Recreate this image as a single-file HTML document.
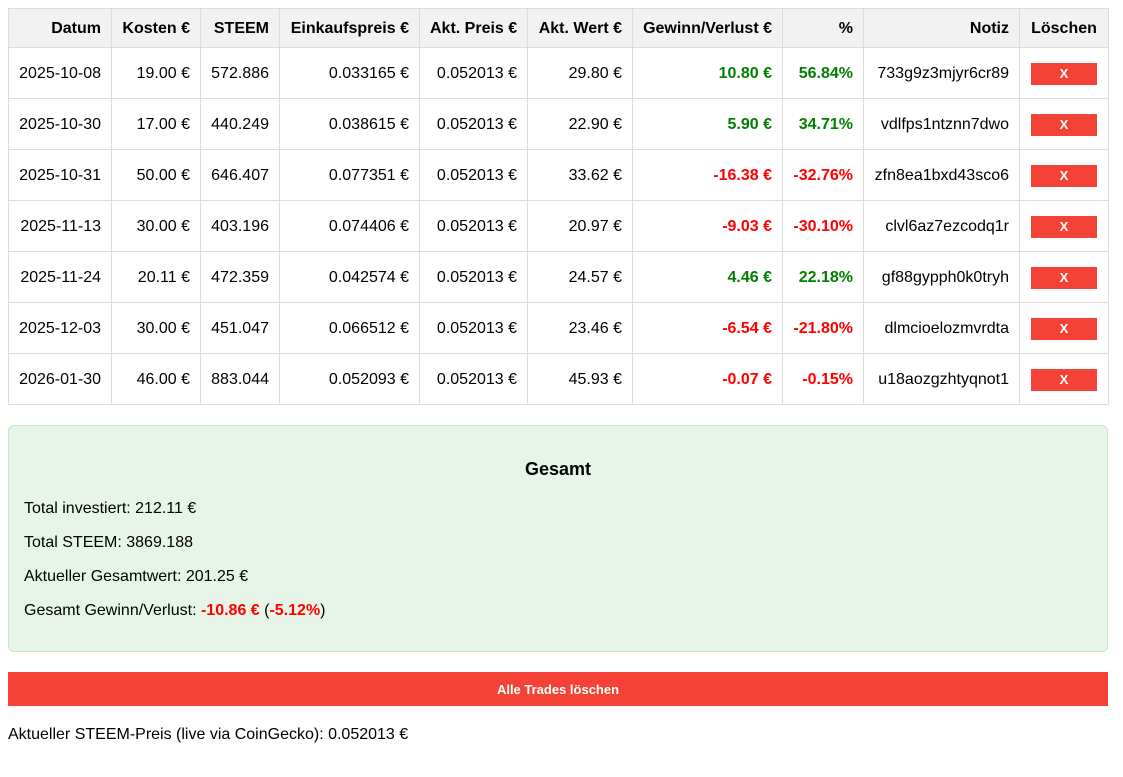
<!DOCTYPE html>
<html><head><meta charset="utf-8"><style>
body{margin:0;background:#fff;font-family:"Liberation Sans",Arial,sans-serif;font-size:16px;color:#000;}
table{position:absolute;left:8px;top:8px;border-collapse:collapse;table-layout:fixed;width:1100px;}
td,th{border:1px solid #ddd;text-align:right;padding:1px 10px 0 10px;height:49px;white-space:nowrap;}
th{background:#f2f2f2;height:37px;font-weight:bold;}
td.c,th.c{text-align:center;}
.g{color:#008000;font-weight:bold}.r{color:#f00;font-weight:bold}
.x{display:inline-block;width:66px;height:22px;line-height:22px;background:#f44336;color:#fff;font-weight:bold;font-size:13px;text-align:center;vertical-align:middle}
.box{position:absolute;left:8px;top:425px;width:1098px;height:225px;background:#e7f5e8;border:1px solid #c8e6c9;border-radius:6px;}
.box h3{margin:0;position:absolute;top:33px;width:100%;text-align:center;font-size:18px;}
.box p{position:absolute;left:15px;margin:0;}
.btn{position:absolute;left:8px;top:672px;width:1100px;height:34px;background:#f44336;color:#fff;font-weight:bold;font-size:13px;text-align:center;line-height:35px;}
.foot{position:absolute;left:8px;top:726px;}
</style></head><body>
<table>
<colgroup><col style="width:103px"><col style="width:89px"><col style="width:79px"><col style="width:140px"><col style="width:108px"><col style="width:105px"><col style="width:150px"><col style="width:81px"><col style="width:156px"><col style="width:89px"></colgroup>
<tr><th>Datum</th><th>Kosten €</th><th>STEEM</th><th>Einkaufspreis €</th><th>Akt. Preis €</th><th>Akt. Wert €</th><th>Gewinn/Verlust €</th><th>%</th><th>Notiz</th><th class="c">Löschen</th></tr>
<tr><td>2025-10-08</td><td>19.00 €</td><td>572.886</td><td>0.033165 €</td><td>0.052013 €</td><td>29.80 €</td><td class="g">10.80 €</td><td class="g">56.84%</td><td>733g9z3mjyr6cr89</td><td class="c"><span class="x">X</span></td></tr>
<tr><td>2025-10-30</td><td>17.00 €</td><td>440.249</td><td>0.038615 €</td><td>0.052013 €</td><td>22.90 €</td><td class="g">5.90 €</td><td class="g">34.71%</td><td>vdlfps1ntznn7dwo</td><td class="c"><span class="x">X</span></td></tr>
<tr><td>2025-10-31</td><td>50.00 €</td><td>646.407</td><td>0.077351 €</td><td>0.052013 €</td><td>33.62 €</td><td class="r">-16.38 €</td><td class="r">-32.76%</td><td>zfn8ea1bxd43sco6</td><td class="c"><span class="x">X</span></td></tr>
<tr><td>2025-11-13</td><td>30.00 €</td><td>403.196</td><td>0.074406 €</td><td>0.052013 €</td><td>20.97 €</td><td class="r">-9.03 €</td><td class="r">-30.10%</td><td>clvl6az7ezcodq1r</td><td class="c"><span class="x">X</span></td></tr>
<tr><td>2025-11-24</td><td>20.11 €</td><td>472.359</td><td>0.042574 €</td><td>0.052013 €</td><td>24.57 €</td><td class="g">4.46 €</td><td class="g">22.18%</td><td>gf88gypph0k0tryh</td><td class="c"><span class="x">X</span></td></tr>
<tr><td>2025-12-03</td><td>30.00 €</td><td>451.047</td><td>0.066512 €</td><td>0.052013 €</td><td>23.46 €</td><td class="r">-6.54 €</td><td class="r">-21.80%</td><td>dlmcioelozmvrdta</td><td class="c"><span class="x">X</span></td></tr>
<tr><td>2026-01-30</td><td>46.00 €</td><td>883.044</td><td>0.052093 €</td><td>0.052013 €</td><td>45.93 €</td><td class="r">-0.07 €</td><td class="r">-0.15%</td><td>u18aozgzhtyqnot1</td><td class="c"><span class="x">X</span></td></tr>
</table>
<div class="box">
<h3>Gesamt</h3>
<p style="top:74px">Total investiert: 212.11 €</p>
<p style="top:108px">Total STEEM: 3869.188</p>
<p style="top:142px">Aktueller Gesamtwert: 201.25 €</p>
<p style="top:176px">Gesamt Gewinn/Verlust: <span class="r">-10.86 €</span> (<span class="r">-5.12%</span>)</p>
</div>
<div class="btn">Alle Trades löschen</div>
<div class="foot">Aktueller STEEM-Preis (live via CoinGecko): 0.052013 €</div>
</body></html>
